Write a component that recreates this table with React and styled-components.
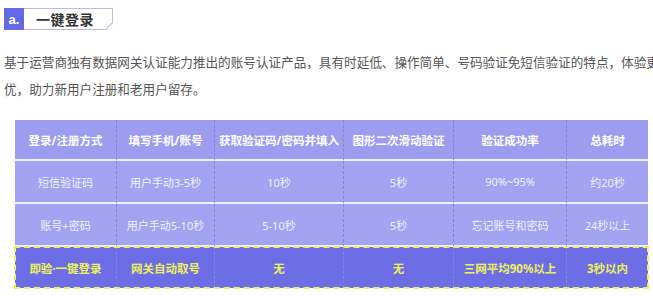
import React from "react"
import styled, { createGlobalStyle } from "styled-components"

const Global = createGlobalStyle`
  html, body {
    margin: 0;
    padding: 0;
    background: #fff;
    overflow: hidden;
    font-family: "Noto Sans CJK SC", "Noto Sans", sans-serif;
  }
`

const Page = styled.div`
  width: 653px;
  height: 296px;
  overflow: hidden;
  padding: 8px 0 0 4px;
  box-sizing: border-box;
`

const Tag = styled.div`
  display: flex;
  height: 22px;
`

const TagLetter = styled.div`
  width: 20px;
  background: #6368e3;
  color: #fff;
  font-family: "Liberation Sans", sans-serif;
  font-weight: 700;
  font-size: 13px;
  display: flex;
  align-items: center;
  justify-content: center;
`

const TagFrame = styled.div`
  width: 89px;
  background: #b9b9ec;
  clip-path: polygon(0 0, 100% 0, 100% calc(100% - 7px), calc(100% - 7px) 100%, 0 100%);
  padding: 1px 1px 1px 0;
  box-sizing: border-box;
`

const TagLabel = styled.div`
  height: 100%;
  background: #fff;
  clip-path: polygon(0 0, 100% 0, 100% calc(100% - 6.5px), calc(100% - 6.5px) 100%, 0 100%);
  color: #333;
  font-size: 14px;
  font-weight: 700;
  letter-spacing: 0.5px;
  padding-left: 12px;
  display: flex;
  align-items: center;
`

const Intro = styled.p`
  margin: 18px 0 0;
  font-size: 12.6px;
  line-height: 27px;
  color: #555;
  white-space: nowrap;
`

const Table = styled.div`
  margin: 18px 0 0 11px;
  width: 633px;
  display: grid;
  grid-template-columns: 101px 98px 129px 110px 113px 82px;
`

const Cell = styled.div`
  height: ${p => (p.$kind === "body" ? 43 : 41)}px;
  display: flex;
  align-items: center;
  justify-content: center;
  font-family: "Noto Sans", "Noto Sans CJK SC", sans-serif;
  font-size: ${p => (p.$kind === "body" ? "11px" : "11.5px")};
  font-weight: ${p => (p.$kind === "body" ? 400 : 700)};
  color: ${p => (p.$kind === "hot" ? "#eef257" : p.$kind === "body" ? "#f0f0fd" : "#fff")};
  background: ${p => (p.$kind === "hot" ? "#6d6ee6" : p.$kind === "head" ? "#9c9def" : "#a2a3f1")};
  border-left: ${p => (p.$first ? "none" : "1px dashed #8384dc")};
  border-bottom: ${p => (p.$kind === "hot" ? "none" : "2px solid #eef0ff")};
  box-sizing: border-box;
  white-space: nowrap;
`

const HotRow = styled.div`
  grid-column: 1 / -1;
  display: grid;
  grid-template-columns: 101px 98px 129px 110px 113px 82px;
  position: relative;
  &::after {
    content: "";
    position: absolute;
    inset: -1px;
    border: 2px dashed #eef257;
    pointer-events: none;
  }
`

const head = ["登录/注册方式", "填写手机/账号", "获取验证码/密码并填入", "图形二次滑动验证", "验证成功率", "总耗时"]
const rows = [
  ["短信验证码", "用户手动3-5秒", "10秒", "5秒", "90%~95%", "约20秒"],
  ["账号+密码", "用户手动5-10秒", "5-10秒", "5秒", "忘记账号和密码", "24秒以上"],
]
const hot = ["即验·一键登录", "网关自动取号", "无", "无", "三网平均90%以上", "3秒以内"]

export default function App() {
  return (
    <Page>
      <Global />
      <Tag>
        <TagLetter>a.</TagLetter>
        <TagFrame>
          <TagLabel>一键登录</TagLabel>
        </TagFrame>
      </Tag>
      <Intro>
        基于运营商独有数据网关认证能力推出的账号认证产品，具有时延低、操作简单、号码验证免短信验证的特点，体验更
        <br />
        优，助力新用户注册和老用户留存。
      </Intro>
      <Table>
        {head.map((t, i) => (
          <Cell key={t} $kind="head" $first={i === 0}>{t}</Cell>
        ))}
        {rows.map((r, ri) =>
          r.map((t, i) => (
            <Cell key={ri + "-" + i} $kind="body" $first={i === 0}>{t}</Cell>
          ))
        )}
        <HotRow>
          {hot.map((t, i) => (
            <Cell key={t + i} $kind="hot" $first={i === 0}>{t}</Cell>
          ))}
        </HotRow>
      </Table>
    </Page>
  )
}
